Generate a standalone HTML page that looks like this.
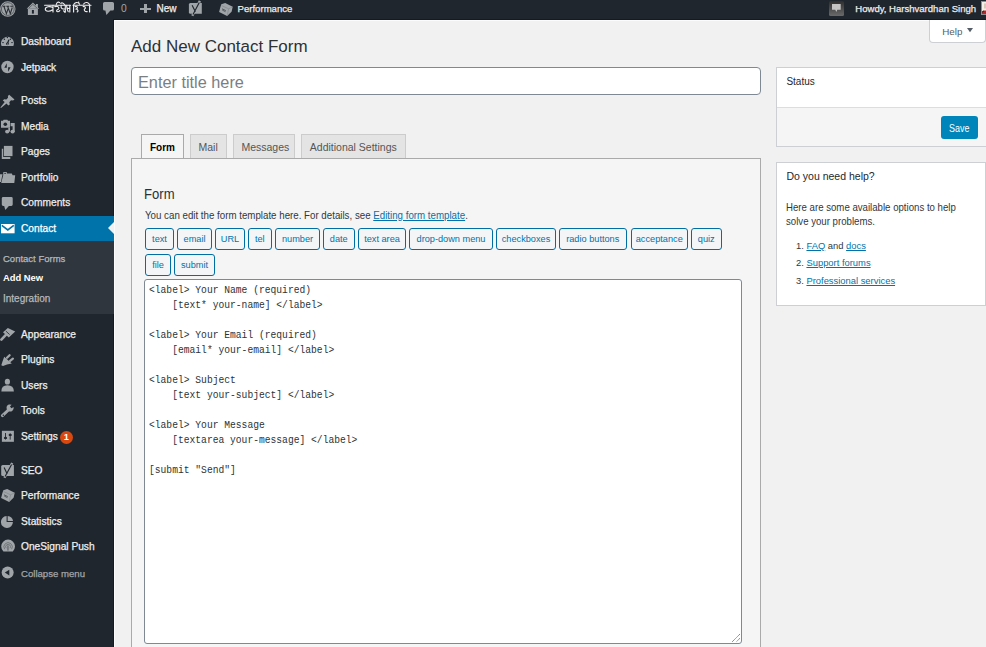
<!DOCTYPE html>
<html><head><meta charset="utf-8"><style>
html,body{margin:0;padding:0;width:986px;height:647px;overflow:hidden;background:#f1f1f1;position:relative;font-family:'Liberation Sans', sans-serif;}
.t{position:absolute;white-space:nowrap;}
.s{-webkit-text-stroke:0.25px currentColor;}
.r{position:absolute;box-sizing:content-box;}
.btn{position:absolute;border:1px solid #006ea3;border-radius:3px;background:#f3f5f6;color:#0073aa;font-size:9.2px;text-align:center;z-index:4;font-family:'Liberation Sans', sans-serif;white-space:nowrap;}
</style></head><body>
<div class="r" style="left:0px;top:0px;width:986px;height:20px;background:#20262d"></div>
<div class="r" style="left:0px;top:20px;width:114px;height:627px;background:#20262d"></div>
<div class="r" style="left:114px;top:20px;width:872px;height:1px;background:#fbfbfb"></div>
<div class="r" style="left:114px;top:20px;width:1px;height:627px;background:#fbfbfb"></div>
<div class="r" style="left:114px;top:19px;width:872px;height:1px;background:#161a1e"></div>
<div class="r" style="left:113px;top:19px;width:1px;height:628px;background:#161a1e"></div>
<svg class="r" style="left:-0.5px;top:0.5px" width="16" height="16" viewBox="0 0 16 16"><circle cx="7.8" cy="8" r="7.7" fill="#a0a5aa"/><circle cx="7.8" cy="8" r="6.4" fill="none" stroke="#3a3f44" stroke-width="0.7"/><path d="M2.6 5.2 H5.4 M6.3 5.2 H9.3 M10.3 5.2 H13 M3.9 5.2 L6.4 12.6 L8.1 7.8 M7.6 5.2 L10.3 12.6 L12.3 6.5" fill="none" stroke="#2a2f34" stroke-width="1.1"/></svg>
<svg class="r" style="left:24px;top:0px" width="18" height="18" viewBox="0 0 18 18"><path d="M8.9 2.6 L2.7 8.7 H15.2 L13.9 7.4 V3.9 H12 V5.6 Z" fill="#a0a5aa"/><path d="M4.6 8.3 L8.9 4.4 L13.3 8.3" fill="none" stroke="#3a3f44" stroke-width="0.6"/><rect x="3.9" y="8.7" width="10" height="6.3" fill="#a0a5aa"/><rect x="7.9" y="10" width="2" height="3.6" fill="#20262d"/></svg>
<svg class="r" style="left:44px;top:0px" width="48" height="13" viewBox="0 0 48 13"><g fill="none" stroke="#eee" stroke-width="1.15" stroke-linecap="round"><path d="M0.6 5.2 H26.5 M29 5.2 H47"/><path d="M8.8 7.6 C6 5.9 1.2 6.6 1.3 9.2 C1.5 11.8 5.5 11.9 8.8 9.8 M9 5.2 V11.9"/><path d="M10.8 6.6 C12.5 6 15.2 6.5 14.8 8.4 C14.4 10 12.2 9.6 12.6 11 C13 12 15.2 12 15.8 10.6"/><path d="M12.3 4.4 C12.8 2 14.6 1.6 15.6 2.6"/><path d="M17.2 5.4 C16.8 7.4 17.4 9 19.5 9 H21.3 M21.3 5.2 V11.9 M19.6 10.8 L21 12.3"/><path d="M20.5 4.8 C19.5 2.8 17.8 2.4 16.8 3.4"/><path d="M22.8 5.4 C22.4 7.4 23 8.8 25 8.4 M25.8 5.2 V11.9 M23 8.6 L24.2 11.6"/><path d="M29.6 5.2 V11.9 M29.6 5 C30.2 2.2 33.8 1.6 35.6 4.2"/><path d="M31.2 6.6 C33.6 6 34.2 8 32.2 9 C34.2 9.6 34.6 11 33.2 12"/><path d="M39.2 6.6 C41.2 6 42.2 8 40.6 9 C39.6 10 41 12 43.2 11.6"/><path d="M45.6 5.2 V11.9 M45.6 5 C45 2.2 41.4 1.6 39.6 4"/></g><circle cx="34.6" cy="2.2" r="0.8" fill="#eee"/></svg>
<svg class="r" style="left:103px;top:2px" width="12" height="13" viewBox="0 0 12 13"><path d="M1.6 0 H9.4 Q11 0 11 1.6 V7 Q11 8.6 9.4 8.6 H7.4 L3.4 12.9 L2.4 8.6 H1.6 Q0 8.6 0 7 V1.6 Q0 0 1.6 0Z" fill="#a0a5aa"/></svg>
<div class="t" style="left:121.00px;top:3.98px;font-size:10.3px;line-height:10.3px;color:#a0a5aa;font-weight:normal;font-family:'Liberation Sans', sans-serif;">0</div>
<div class="r" style="left:139.5px;top:7.5px;width:11.5px;height:2.8px;background:#a0a5aa"></div>
<div class="r" style="left:143.9px;top:4.3px;width:2.8px;height:9.1px;background:#a0a5aa"></div>
<div class="t s" style="left:156.50px;top:4.13px;font-size:10px;line-height:10px;color:#eee;font-weight:normal;font-family:'Liberation Sans', sans-serif;">New</div>
<svg class="r" style="left:184px;top:0px" width="20" height="18" viewBox="0 0 20 18"><path d="M6.4 3 H17.8 V13.7 H6.4 Q4.9 13.7 4.9 12.2 V4.5 Q4.9 3 6.4 3Z" fill="#a0a5aa"/><path d="M15.9 0.9 L8.3 15.8" stroke="#a0a5aa" stroke-width="2.4"/><path d="M15.3 2.4 L9 14.6 M8.1 5.3 L11.4 11.8" stroke="#20262d" stroke-width="1.15"/></svg>
<svg class="r" style="left:216px;top:0px" width="20" height="18" viewBox="0 0 20 18"><path d="M5.3 4.2 L9.2 3.1 L16.7 6.7 L15.6 11.7 L11.1 15.9 L3.1 12 L4.2 7.8 Z" fill="#a0a5aa"/><path d="M5.6 5.6 L12.6 8.8 L16.4 7 M12.6 8.8 L11.2 15.6" stroke="#80858a" stroke-width="0.6" fill="none"/><path d="M6 8.8 L9.8 10.6 M6.3 10.1 L9.5 11.7" stroke="#4f5459" stroke-width="0.9"/></svg>
<div class="t s" style="left:237.50px;top:3.97px;font-size:9.6px;line-height:9.6px;color:#eee;font-weight:normal;font-family:'Liberation Sans', sans-serif;">Performance</div>
<div class="r" style="left:829px;top:1px;width:15px;height:15px;background:linear-gradient(#2e2e2e,#6a6a6a);border-radius:1.5px"></div>
<svg class="r" style="left:832px;top:4px" width="9" height="8" viewBox="0 0 9 8"><path d="M0 0 H8.7 V5.75 H5.3 L4.3 7.9 L3.3 5.75 H0Z" fill="#c4c4c4"/></svg>
<div class="t s" style="left:855.30px;top:4.01px;font-size:9.55px;line-height:9.55px;color:#eee;font-weight:normal;font-family:'Liberation Sans', sans-serif;">Howdy, Harshvardhan Singh</div>
<svg class="r" style="left:981px;top:1px" width="5" height="14" viewBox="0 0 5 14"><rect width="5" height="14" fill="#8c8f94"/><rect x="1" y="1" width="4" height="12" fill="#f4f0e8"/><path d="M1 13 V10.5 Q2 9 5 9.5 V13Z" fill="#b3282d"/><path d="M1 11 Q1.5 9.6 3 9.4 L3.2 10.4 Q2 10.5 1 12Z" fill="#3a2020"/><rect x="3" y="2.5" width="2" height="5" fill="#dcc8b8"/></svg>
<div class="r" style="left:0px;top:216px;width:114px;height:25px;background:#0073aa"></div>
<svg class="r" style="left:108px;top:222px" width="6" height="12" viewBox="0 0 6 12"><path d="M6 0 L0 6 L6 12Z" fill="#f1f1f1"/></svg>
<div class="r" style="left:0px;top:241px;width:114px;height:73px;background:#2f363d"></div>
<div class="t s" style="left:21.00px;top:37.06px;font-size:10.2px;line-height:10.2px;color:#eee;font-weight:normal;font-family:'Liberation Sans', sans-serif;">Dashboard</div>
<div class="t s" style="left:21.00px;top:63.06px;font-size:10.2px;line-height:10.2px;color:#eee;font-weight:normal;font-family:'Liberation Sans', sans-serif;">Jetpack</div>
<div class="t s" style="left:21.00px;top:96.06px;font-size:10.2px;line-height:10.2px;color:#eee;font-weight:normal;font-family:'Liberation Sans', sans-serif;">Posts</div>
<div class="t s" style="left:21.00px;top:122.06px;font-size:10.2px;line-height:10.2px;color:#eee;font-weight:normal;font-family:'Liberation Sans', sans-serif;">Media</div>
<div class="t s" style="left:21.00px;top:147.36px;font-size:10.2px;line-height:10.2px;color:#eee;font-weight:normal;font-family:'Liberation Sans', sans-serif;">Pages</div>
<div class="t s" style="left:21.00px;top:173.06px;font-size:10.2px;line-height:10.2px;color:#eee;font-weight:normal;font-family:'Liberation Sans', sans-serif;">Portfolio</div>
<div class="t s" style="left:21.00px;top:198.26px;font-size:10.2px;line-height:10.2px;color:#eee;font-weight:normal;font-family:'Liberation Sans', sans-serif;">Comments</div>
<div class="t s" style="left:21.00px;top:223.96px;font-size:10.2px;line-height:10.2px;color:#fff;font-weight:normal;font-family:'Liberation Sans', sans-serif;">Contact</div>
<div class="t s" style="left:21.00px;top:330.26px;font-size:10.2px;line-height:10.2px;color:#eee;font-weight:normal;font-family:'Liberation Sans', sans-serif;">Appearance</div>
<div class="t s" style="left:21.00px;top:355.36px;font-size:10.2px;line-height:10.2px;color:#eee;font-weight:normal;font-family:'Liberation Sans', sans-serif;">Plugins</div>
<div class="t s" style="left:21.00px;top:381.06px;font-size:10.2px;line-height:10.2px;color:#eee;font-weight:normal;font-family:'Liberation Sans', sans-serif;">Users</div>
<div class="t s" style="left:21.00px;top:406.16px;font-size:10.2px;line-height:10.2px;color:#eee;font-weight:normal;font-family:'Liberation Sans', sans-serif;">Tools</div>
<div class="t s" style="left:21.00px;top:432.36px;font-size:10.2px;line-height:10.2px;color:#eee;font-weight:normal;font-family:'Liberation Sans', sans-serif;">Settings</div>
<div class="t s" style="left:21.00px;top:466.36px;font-size:10.2px;line-height:10.2px;color:#eee;font-weight:normal;font-family:'Liberation Sans', sans-serif;">SEO</div>
<div class="t s" style="left:21.00px;top:490.86px;font-size:10.2px;line-height:10.2px;color:#eee;font-weight:normal;font-family:'Liberation Sans', sans-serif;">Performance</div>
<div class="t s" style="left:21.00px;top:517.26px;font-size:10.2px;line-height:10.2px;color:#eee;font-weight:normal;font-family:'Liberation Sans', sans-serif;">Statistics</div>
<div class="t s" style="left:21.00px;top:542.36px;font-size:10.2px;line-height:10.2px;color:#eee;font-weight:normal;font-family:'Liberation Sans', sans-serif;">OneSignal Push</div>
<div class="t s" style="left:3.00px;top:253.96px;font-size:9.5px;line-height:9.5px;color:#b4b9be;font-weight:normal;font-family:'Liberation Sans', sans-serif;">Contact Forms</div>
<div class="t" style="left:3.00px;top:273.34px;font-size:9.4px;line-height:9.4px;color:#fff;font-weight:bold;font-family:'Liberation Sans', sans-serif;">Add New</div>
<div class="t s" style="left:3.00px;top:293.63px;font-size:10.0px;line-height:10.0px;color:#b4b9be;font-weight:normal;font-family:'Liberation Sans', sans-serif;">Integration</div>
<div class="t s" style="left:21.00px;top:568.97px;font-size:9.6px;line-height:9.6px;color:#a0a5aa;font-weight:normal;font-family:'Liberation Sans', sans-serif;">Collapse menu</div>
<svg class="r" style="left:0px;top:32px" width="16" height="16" viewBox="0 0 16 16"><path d="M1.6 14 A6.45 6.45 0 1 1 13.3 14 Z" fill="#a0a5aa"/><path d="M7.4 11.8 L8.7 8.2" stroke="#20262d" stroke-width="1.3" stroke-linecap="round"/><circle cx="7.4" cy="11.8" r="1.4" fill="#20262d"/><circle cx="7.4" cy="12.1" r="0.5" fill="#ddd"/><g fill="#20262d"><circle cx="7.4" cy="5.5" r="0.75"/><circle cx="4.4" cy="7.3" r="0.75"/><circle cx="10.4" cy="7.3" r="0.75"/><rect x="2.2" y="10.2" width="1.6" height="0.9"/><rect x="11.2" y="10.2" width="1.6" height="0.9"/></g></svg>
<svg class="r" style="left:0px;top:58px" width="16" height="16" viewBox="0 0 16 16"><circle cx="7.45" cy="9" r="6.2" fill="#a0a5aa"/><path d="M6.8 5.3 V9.8 H4.3 Z M8.1 13.8 V9.3 H10.6 Z" fill="#20262d"/></svg>
<svg class="r" style="left:0px;top:92px" width="16" height="17" viewBox="0 0 16 17"><path d="M9.2 2.8 L14.5 7.5 L13 8.5 L11 8.3 L9.3 10.3 L9.8 12.5 L8.3 13.6 L6.5 11.5 L1 16 L0.4 15.6 L4.7 9.9 L2.8 8.6 L4.2 7.2 L6.3 7.5 L8 5.7 L7.9 4 Z" fill="#a0a5aa"/></svg>
<svg class="r" style="left:0px;top:118px" width="16" height="17" viewBox="0 0 16 17"><path d="M1 2.8 H3 L3.6 1.7 H7.4 L8 2.8 H10 V9.7 H1 Z" fill="#a0a5aa"/><circle cx="5.3" cy="6.2" r="1.8" fill="#20262d"/><path d="M10.6 4.9 H14.7 V14 H12.6 V8.2 H10.6 Z" fill="#a0a5aa"/><path d="M8.3 9.8 H10 V13.5 H8.3Z" fill="#a0a5aa"/><ellipse cx="7.2" cy="13.6" rx="2.1" ry="1.9" fill="#a0a5aa"/><ellipse cx="12.6" cy="13.6" rx="2.1" ry="1.9" fill="#a0a5aa"/></svg>
<svg class="r" style="left:0px;top:143px" width="16" height="17" viewBox="0 0 16 17"><rect x="3.9" y="2.9" width="8.6" height="10.2" fill="#a0a5aa"/><path d="M1.8 5.8 H3.2 V13.9 H10.3 V16 H1.8 Z" fill="#a0a5aa"/></svg>
<svg class="r" style="left:0px;top:168px" width="16" height="16" viewBox="0 0 16 16"><path d="M3.2 7.2 V4.5 Q3.2 3.9 3.8 3.9 H6.3 Q6.9 3.9 6.9 4.5 V5.6 H11.8 L12.6 7.2 H15.2 L14.3 15 H1.2 Z" fill="#a0a5aa"/><rect x="4.2" y="4.9" width="1.8" height="0.8" fill="#20262d"/><path d="M0 6.2 H2.6 Q1.6 10 1 14 H0 Z" fill="#a0a5aa"/></svg>
<svg class="r" style="left:0px;top:194px" width="16" height="17" viewBox="0 0 16 17"><path d="M3.2 2.9 H11.3 Q12.7 2.9 12.7 4.3 V10.6 Q12.7 12 11.3 12 H8.9 L5.3 16 L4.2 12 H3.2 Q1.8 12 1.8 10.6 V4.3 Q1.8 2.9 3.2 2.9Z" fill="#a0a5aa"/></svg>
<svg class="r" style="left:1.2px;top:223.7px" width="14" height="10" viewBox="0 0 14 10"><rect x="0" y="0" width="13.6" height="9.3" fill="#fff"/><path d="M0.8 1.3 L6.8 6 L12.8 1.3" stroke="#0073aa" stroke-width="1.6" fill="none"/></svg>
<svg class="r" style="left:0px;top:324px" width="16" height="17" viewBox="0 0 16 17"><path d="M3 8.3 L7.8 4 L15.2 7.4 L8.8 13.5 Z" fill="#a0a5aa"/><path d="M5.8 7 L9.7 10.6" stroke="#20262d" stroke-width="0.8"/><path d="M1.4 15.6 L5.6 11.2" stroke="#a0a5aa" stroke-width="2.6" stroke-linecap="round"/></svg>
<svg class="r" style="left:0px;top:349px" width="16" height="18" viewBox="0 0 16 18"><path d="M4.2 7.8 L11.8 14.5 L7 15.6 L3 17 L1.3 16.2 L2.5 12.5 Z" fill="#a0a5aa"/><path d="M7 8.8 L9.6 6.2 M10.1 11.8 L12.9 9.6" stroke="#a0a5aa" stroke-width="2.3" stroke-linecap="round"/></svg>
<svg class="r" style="left:0px;top:375px" width="16" height="17" viewBox="0 0 16 17"><ellipse cx="7.4" cy="6.7" rx="2.6" ry="2.9" fill="#a0a5aa"/><path d="M1.4 16.6 Q1.2 10.2 7.4 10.2 Q13.8 10.2 13.9 16.6 Z" fill="#a0a5aa"/></svg>
<svg class="r" style="left:0px;top:400px" width="16" height="18" viewBox="0 0 16 18"><path d="M2.4 15.6 L8.4 10" stroke="#a0a5aa" stroke-width="3" stroke-linecap="round"/><path d="M6.8 9.4 Q5.8 5.6 8.8 4.6 Q10.4 4.2 11.6 4.8 L10 6.6 L11.4 8.2 L13.6 7 Q14.2 9.6 12.2 11 Q10.4 12 8.8 11.2 Z" fill="#a0a5aa"/><circle cx="3.3" cy="15.3" r="0.75" fill="#20262d"/></svg>
<svg class="r" style="left:0px;top:425px" width="16" height="18" viewBox="0 0 16 18"><rect x="1.9" y="5.8" width="12" height="11" fill="#a0a5aa"/><path d="M5.5 8 V14.6 M10.2 8.4 V14.6" stroke="#20262d" stroke-width="0.9"/><ellipse cx="5.5" cy="12.9" rx="1.6" ry="1.2" fill="#20262d"/><ellipse cx="10.2" cy="9.9" rx="1.6" ry="1.2" fill="#20262d"/></svg>
<svg class="r" style="left:0px;top:462px" width="16" height="17" viewBox="0 0 16 17"><path d="M2.7 3 H13.9 V13.9 H2.7 Q1.2 13.9 1.2 12.4 V4.5 Q1.2 3 2.7 3Z" fill="#a0a5aa"/><path d="M12.2 1 L4.4 15.8" stroke="#a0a5aa" stroke-width="2.4"/><path d="M11.6 2.6 L5.1 14.6 M4.1 5.6 L7.2 12" stroke="#20262d" stroke-width="1.15"/></svg>
<svg class="r" style="left:-2.3px;top:486px" width="20" height="18" viewBox="0 0 20 18"><path d="M5.3 4.2 L9.2 3.1 L16.7 6.7 L15.6 11.7 L11.1 15.9 L3.1 12 L4.2 7.8 Z" fill="#a0a5aa"/><path d="M5.6 5.6 L12.6 8.8 L16.4 7 M12.6 8.8 L11.2 15.6" stroke="#80858a" stroke-width="0.6" fill="none"/><path d="M6 8.8 L9.8 10.6 M6.3 10.1 L9.5 11.7" stroke="#4f5459" stroke-width="0.9"/></svg>
<svg class="r" style="left:0px;top:513px" width="16" height="16" viewBox="0 0 16 16"><path d="M6.6 3 V8.9 H12.9 A6 6 0 1 1 6.6 3Z" fill="#a0a5aa"/><path d="M7.6 2.9 A6 6 0 0 1 13.1 7.9 H7.6Z" fill="#a0a5aa"/></svg>
<svg class="r" style="left:0px;top:536px" width="16" height="17" viewBox="0 0 16 17"><path d="M3.4 15.5 A6.9 6.9 0 1 1 12.8 15.5 Z" fill="#a0a5aa"/><path d="M4.6 13.2 A4.2 4.2 0 1 1 11.6 13.2" stroke="#5d6267" stroke-width="0.7" fill="none"/><path d="M6.2 12.2 A2.4 2.4 0 1 1 10 12.2" stroke="#5d6267" stroke-width="0.7" fill="none"/><rect x="7.2" y="9.4" width="1.5" height="5.2" fill="#6d7277"/></svg>
<svg class="r" style="left:0px;top:564px" width="16" height="16" viewBox="0 0 16 16"><circle cx="7.65" cy="8.6" r="6" fill="#a0a5aa"/><path d="M4.8 8.6 L9.3 5.8 V11.4Z" fill="#20262d"/></svg>
<div class="r" style="left:60px;top:430.8px;width:12.9px;height:12.9px;background:#d9480f;border-radius:50%"></div>
<div class="t" style="left:63.80px;top:433.21px;font-size:9.2px;line-height:9.2px;color:#fff;font-weight:bold;font-family:'Liberation Sans', sans-serif;">1</div>
<div class="t" style="left:130.70px;top:37.77px;font-size:17.4px;line-height:17.4px;color:#2c3136;font-weight:normal;font-family:'Liberation Sans', sans-serif;transform:scaleX(0.977);transform-origin:0 0;">Add New Contact Form</div>
<div class="r" style="left:929px;top:20px;width:55px;height:22px;background:#fff;border:1px solid #ccd0d4;border-top:none;border-radius:0 0 4px 4px"></div>
<div class="t" style="left:942.30px;top:27.00px;font-size:9.8px;line-height:9.8px;color:#555d66;font-weight:normal;font-family:'Liberation Sans', sans-serif;">Help</div>
<svg class="r" style="left:967px;top:28px" width="6" height="5" viewBox="0 0 6 5"><path d="M0 0 H6 L3 4.2Z" fill="#555d66"/></svg>
<div class="r" style="left:131px;top:67px;width:628px;height:26px;background:#fff;border:1px solid #7e8993;border-radius:4px"></div>
<div class="t" style="left:138.00px;top:74.00px;font-size:16.3px;line-height:16.3px;color:#7a7f84;font-weight:normal;font-family:'Liberation Sans', sans-serif;">Enter title here</div>
<div class="r" style="left:141px;top:134px;width:41px;height:23px;background:#f5f5f5;border:1px solid #aaa;border-bottom:none;z-index:3"></div>
<div class="t" style="left:150.00px;top:143.03px;font-size:10px;line-height:10px;color:#000;font-weight:bold;font-family:'Liberation Sans', sans-serif;z-index:4">Form</div>
<div class="r" style="left:190px;top:134px;width:35px;height:23px;background:#e4e4e4;border:1px solid #ccc;border-bottom:none"></div>
<div class="r" style="left:233px;top:134px;width:60px;height:23px;background:#e4e4e4;border:1px solid #ccc;border-bottom:none"></div>
<div class="r" style="left:301px;top:134px;width:103px;height:23px;background:#e4e4e4;border:1px solid #ccc;border-bottom:none"></div>
<div class="r" style="left:131px;top:158px;width:628px;height:500px;background:#f5f5f5;border:1px solid #aaa;z-index:2"></div>
<div class="t" style="left:198.50px;top:142.41px;font-size:10.5px;line-height:10.5px;color:#555;font-weight:normal;font-family:'Liberation Sans', sans-serif;">Mail</div>
<div class="t" style="left:241.40px;top:142.41px;font-size:10.5px;line-height:10.5px;color:#555;font-weight:normal;font-family:'Liberation Sans', sans-serif;">Messages</div>
<div class="t" style="left:309.80px;top:142.41px;font-size:10.5px;line-height:10.5px;color:#555;font-weight:normal;font-family:'Liberation Sans', sans-serif;">Additional Settings</div>
<div class="t" style="left:144.20px;top:186.81px;font-size:14.4px;line-height:14.4px;color:#2c3136;font-weight:normal;font-family:'Liberation Sans', sans-serif;transform:scaleX(0.91);transform-origin:0 0;z-index:4">Form</div>
<div class="t" style="left:145.20px;top:209.91px;font-size:10.5px;line-height:10.5px;color:#32373c;font-weight:normal;font-family:'Liberation Sans', sans-serif;transform:scaleX(0.926);transform-origin:0 0;z-index:4">You can edit the form template here. For details, see <span style="color:#0073aa;text-decoration:underline">Editing form template</span>.</div>
<div class="btn" style="left:145px;top:228px;width:27.0px;height:19.5px;line-height:20.7px">text</div>
<div class="btn" style="left:177px;top:228px;width:33.0px;height:19.5px;line-height:20.7px">email</div>
<div class="btn" style="left:215px;top:228px;width:28.0px;height:19.5px;line-height:20.7px">URL</div>
<div class="btn" style="left:248px;top:228px;width:21.5px;height:19.5px;line-height:20.7px">tel</div>
<div class="btn" style="left:275px;top:228px;width:43.0px;height:19.5px;line-height:20.7px">number</div>
<div class="btn" style="left:323px;top:228px;width:29.5px;height:19.5px;line-height:20.7px">date</div>
<div class="btn" style="left:358px;top:228px;width:46.0px;height:19.5px;line-height:20.7px">text area</div>
<div class="btn" style="left:409px;top:228px;width:82.0px;height:19.5px;line-height:20.7px">drop-down menu</div>
<div class="btn" style="left:496px;top:228px;width:58.0px;height:19.5px;line-height:20.7px">checkboxes</div>
<div class="btn" style="left:559px;top:228px;width:65.5px;height:19.5px;line-height:20.7px">radio buttons</div>
<div class="btn" style="left:630.5px;top:228px;width:55.5px;height:19.5px;line-height:20.7px">acceptance</div>
<div class="btn" style="left:691px;top:228px;width:28.5px;height:19.5px;line-height:20.7px">quiz</div>
<div class="btn" style="left:145px;top:254px;width:24.0px;height:20.0px;line-height:21.2px">file</div>
<div class="btn" style="left:174px;top:254px;width:39.0px;height:20.0px;line-height:21.2px">submit</div>
<div class="r" style="left:144px;top:279px;width:596px;height:363px;background:#fff;border:1px solid #7e8993;border-radius:3px;z-index:4"></div>
<div class="t" style="left:149.00px;top:284.88px;font-size:10.6px;line-height:10.6px;color:#2c3338;font-weight:normal;font-family:'Liberation Mono', monospace;transform:scaleX(0.9104);transform-origin:0 0;z-index:5;white-space:pre">&lt;label&gt;&nbsp;Your&nbsp;Name&nbsp;(required)</div>
<div class="t" style="left:149.00px;top:299.88px;font-size:10.6px;line-height:10.6px;color:#2c3338;font-weight:normal;font-family:'Liberation Mono', monospace;transform:scaleX(0.9104);transform-origin:0 0;z-index:5;white-space:pre">&nbsp;&nbsp;&nbsp;&nbsp;[text*&nbsp;your-name]&nbsp;&lt;/label&gt;</div>
<div class="t" style="left:149.00px;top:329.88px;font-size:10.6px;line-height:10.6px;color:#2c3338;font-weight:normal;font-family:'Liberation Mono', monospace;transform:scaleX(0.9104);transform-origin:0 0;z-index:5;white-space:pre">&lt;label&gt;&nbsp;Your&nbsp;Email&nbsp;(required)</div>
<div class="t" style="left:149.00px;top:344.88px;font-size:10.6px;line-height:10.6px;color:#2c3338;font-weight:normal;font-family:'Liberation Mono', monospace;transform:scaleX(0.9104);transform-origin:0 0;z-index:5;white-space:pre">&nbsp;&nbsp;&nbsp;&nbsp;[email*&nbsp;your-email]&nbsp;&lt;/label&gt;</div>
<div class="t" style="left:149.00px;top:374.88px;font-size:10.6px;line-height:10.6px;color:#2c3338;font-weight:normal;font-family:'Liberation Mono', monospace;transform:scaleX(0.9104);transform-origin:0 0;z-index:5;white-space:pre">&lt;label&gt;&nbsp;Subject</div>
<div class="t" style="left:149.00px;top:389.88px;font-size:10.6px;line-height:10.6px;color:#2c3338;font-weight:normal;font-family:'Liberation Mono', monospace;transform:scaleX(0.9104);transform-origin:0 0;z-index:5;white-space:pre">&nbsp;&nbsp;&nbsp;&nbsp;[text&nbsp;your-subject]&nbsp;&lt;/label&gt;</div>
<div class="t" style="left:149.00px;top:419.88px;font-size:10.6px;line-height:10.6px;color:#2c3338;font-weight:normal;font-family:'Liberation Mono', monospace;transform:scaleX(0.9104);transform-origin:0 0;z-index:5;white-space:pre">&lt;label&gt;&nbsp;Your&nbsp;Message</div>
<div class="t" style="left:149.00px;top:434.88px;font-size:10.6px;line-height:10.6px;color:#2c3338;font-weight:normal;font-family:'Liberation Mono', monospace;transform:scaleX(0.9104);transform-origin:0 0;z-index:5;white-space:pre">&nbsp;&nbsp;&nbsp;&nbsp;[textarea&nbsp;your-message]&nbsp;&lt;/label&gt;</div>
<div class="t" style="left:149.00px;top:464.88px;font-size:10.6px;line-height:10.6px;color:#2c3338;font-weight:normal;font-family:'Liberation Mono', monospace;transform:scaleX(0.9104);transform-origin:0 0;z-index:5;white-space:pre">[submit&nbsp;"Send"]</div>
<svg class="r" style="left:730px;top:632px;z-index:6" width="11" height="11" viewBox="0 0 11 11"><path d="M9.7 2.3 L2.3 9.7 M9.7 6.5 L6.4 9.7" stroke="#555" stroke-width="1" stroke-dasharray="1 0.6"/></svg>
<div class="r" style="left:776px;top:67px;width:212px;height:78px;background:#fff;border:1px solid #ccd0d4"></div>
<div class="r" style="left:777px;top:107px;width:212px;height:38px;background:#f5f5f5;border-top:1px solid #ddd"></div>
<div class="t" style="left:786.40px;top:76.73px;font-size:10.0px;line-height:10.0px;color:#23282d;font-weight:normal;font-family:'Liberation Sans', sans-serif;">Status</div>
<div class="r" style="left:941px;top:116px;width:37px;height:23px;background:#0085ba;border-radius:3px"></div>
<div class="t" style="left:949.00px;top:123.41px;font-size:10.5px;line-height:10.5px;color:#fff;font-weight:normal;font-family:'Liberation Sans', sans-serif;transform:scaleX(0.85);transform-origin:0 0;">Save</div>
<div class="r" style="left:776px;top:162px;width:208px;height:142px;background:#fff;border:1px solid #ccd0d4"></div>
<div class="t" style="left:786.50px;top:171.41px;font-size:10.5px;line-height:10.5px;color:#23282d;font-weight:normal;font-family:'Liberation Sans', sans-serif;">Do you need help?</div>
<div class="t" style="left:786.40px;top:203.26px;font-size:10.2px;line-height:10.2px;color:#32373c;font-weight:normal;font-family:'Liberation Sans', sans-serif;transform:scaleX(0.946);transform-origin:0 0;">Here are some available options to help</div>
<div class="t" style="left:786.40px;top:217.06px;font-size:10.2px;line-height:10.2px;color:#32373c;font-weight:normal;font-family:'Liberation Sans', sans-serif;transform:scaleX(0.946);transform-origin:0 0;">solve your problems.</div>
<div class="t" style="left:796.00px;top:240.92px;font-size:9.9px;line-height:9.9px;color:#32373c;font-weight:normal;font-family:'Liberation Sans', sans-serif;transform:scaleX(0.95);transform-origin:0 0;">1. <span style="color:#0073aa;text-decoration:underline">FAQ</span> and <span style="color:#0073aa;text-decoration:underline">docs</span></div>
<div class="t" style="left:796.00px;top:257.92px;font-size:9.9px;line-height:9.9px;color:#32373c;font-weight:normal;font-family:'Liberation Sans', sans-serif;transform:scaleX(0.95);transform-origin:0 0;">2. <span style="color:#0073aa;text-decoration:underline">Support forums</span></div>
<div class="t" style="left:796.00px;top:276.02px;font-size:9.9px;line-height:9.9px;color:#32373c;font-weight:normal;font-family:'Liberation Sans', sans-serif;transform:scaleX(0.95);transform-origin:0 0;">3. <span style="color:#0073aa;text-decoration:underline">Professional services</span></div>
</body></html>
